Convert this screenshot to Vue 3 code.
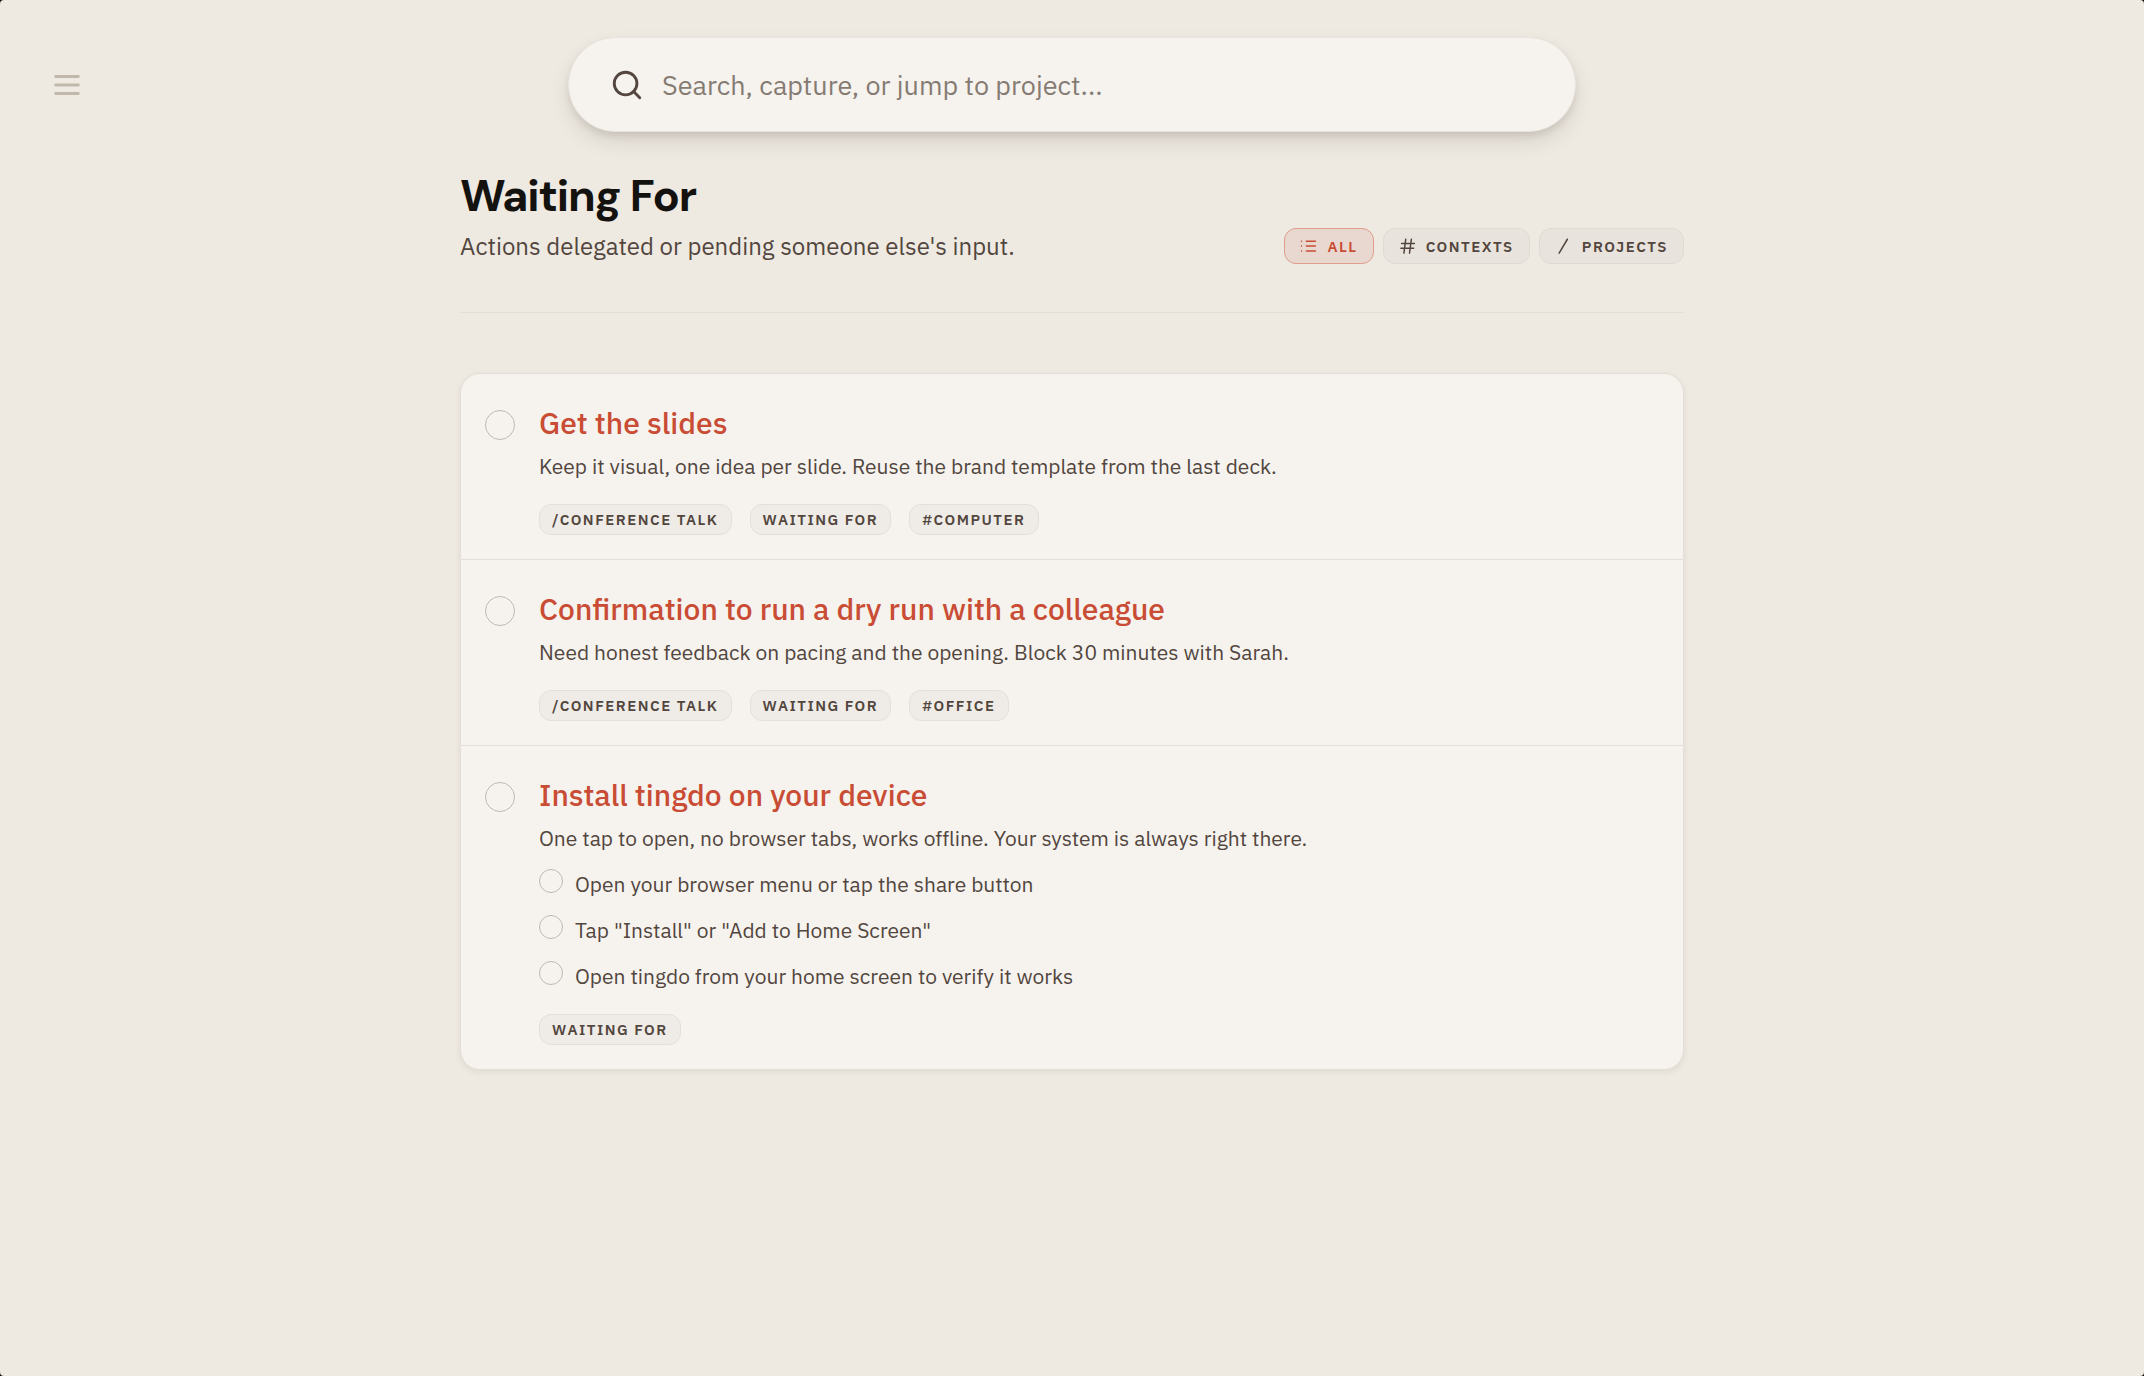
<template>
  <div class="page">
    <header class="topbar">
      <button type="button" class="menu-button" aria-label="Open menu">
        <svg viewBox="0 0 24 24" class="icon-lg">
          <path d="M4 6h16M4 12h16M4 18h16" />
        </svg>
      </button>
      <label class="search-bar">
        <svg viewBox="0 0 24 24" class="icon-lg">
          <circle cx="11" cy="11" r="8" />
          <path d="M21 21l-4.35-4.35" />
        </svg>
        <input v-model="query" type="text" class="search-input" aria-label="Search" placeholder="Search, capture, or jump to project..." />
      </label>
    </header>

    <main class="content">
      <div class="page-header">
        <div class="heading">
          <h1 class="page-title">Waiting For</h1>
          <p class="page-subtitle">Actions delegated or pending someone else's input.</p>
        </div>
        <div class="filters">
          <button v-for="filter in filters" :key="filter.id" type="button" class="filter-button"
                  :class="{ active: activeFilter === filter.id }" @click="activeFilter = filter.id">
            <svg viewBox="0 0 24 24" class="icon-sm">
              <path :d="filter.icon" />
            </svg>
            <span>{{ filter.label }}</span>
          </button>
        </div>
      </div>

      <ul class="action-list">
        <li v-for="action in actions" :key="action.id" class="action-item">
          <input :id="`action-${action.id}`" v-model="action.done" type="checkbox" class="check" />
          <div class="action-body">
            <h2 class="action-title">
              <label :for="`action-${action.id}`">{{ action.title }}</label>
            </h2>
            <p class="action-note">{{ action.note }}</p>
            <ul v-if="action.steps.length" class="steps">
              <li v-for="step in action.steps" :key="step.text">
                <label class="step">
                  <input v-model="step.done" type="checkbox" class="check check-small" />
                  <span>{{ step.text }}</span>
                </label>
              </li>
            </ul>
            <div class="tags">
              <span v-for="tag in action.tags" :key="tag" class="tag">{{ tag }}</span>
            </div>
          </div>
        </li>
      </ul>
    </main>
  </div>
</template>

<script setup>
import { ref } from 'vue';

const query = ref('');
const activeFilter = ref('all');

const filters = [
  { id: 'all', label: 'All', icon: 'M8.5 5.5h12M8.5 12h12M8.5 18.5h12M2 5.5h.01M2 12h.01M2 18.5h.01' },
  { id: 'contexts', label: 'Contexts', icon: 'M3.5 8.5h17M2.5 15h17M9 3L6.5 21.5M16.5 3L14 21.5' },
  { id: 'projects', label: 'Projects', icon: 'M16.5 3l-11 18.5' },
];

const actions = ref([
  {
    id: 1,
    title: 'Get the slides',
    note: 'Keep it visual, one idea per slide. Reuse the brand template from the last deck.',
    done: false,
    steps: [],
    tags: ['/Conference Talk', 'Waiting For', '#Computer'],
  },
  {
    id: 2,
    title: 'Confirmation to run a dry run with a colleague',
    note: 'Need honest feedback on pacing and the opening. Block 30 minutes with Sarah.',
    done: false,
    steps: [],
    tags: ['/Conference Talk', 'Waiting For', '#Office'],
  },
  {
    id: 3,
    title: 'Install tingdo on your device',
    note: 'One tap to open, no browser tabs, works offline. Your system is always right there.',
    done: false,
    steps: [
      { text: 'Open your browser menu or tap the share button', done: false },
      { text: 'Tap "Install" or "Add to Home Screen"', done: false },
      { text: 'Open tingdo from your home screen to verify it works', done: false },
    ],
    tags: ['Waiting For'],
  },
]);
</script>

<style>
html {
  background-color: #0d0f12;
}

body {
  margin: 0;
}
</style>

<style scoped>
.page {
  min-height: 100vh;
  box-sizing: border-box;
  border-radius: 4px;
  background-color: #eee9e1;
  color: #52463e;
  font-family: 'IBM Plex Sans', 'Noto Sans', sans-serif;
}

.page * {
  box-sizing: border-box;
}

button,
input {
  font-family: inherit;
  color: inherit;
}

h1,
h2,
p,
ul {
  margin: 0;
  padding: 0;
}

ul {
  list-style: none;
}

svg {
  flex-shrink: 0;
  fill: none;
  stroke: currentColor;
  stroke-linecap: round;
  stroke-linejoin: round;
}

.icon-lg {
  width: 34px;
  height: 34px;
  stroke-width: 2;
}

.icon-sm {
  width: 18px;
  height: 18px;
  stroke-width: 2;
}

.topbar {
  display: grid;
  grid-template-columns: minmax(100px, 1fr) minmax(0, 1008px) minmax(0, 1fr);
  align-items: center;
  padding-top: 37px;
}

.menu-button {
  display: flex;
  justify-self: start;
  margin-left: 42px;
  padding: 8px;
  border: none;
  background: none;
  color: #bfb8ab;
  cursor: pointer;
}

.search-bar {
  display: flex;
  align-items: center;
  gap: 18px;
  height: 95px;
  padding: 0 41px;
  border: 1px solid #e8e4dd;
  border-radius: 48px;
  background-color: #f6f3ee;
  box-shadow: 0 10px 24px -6px rgba(60, 50, 40, 0.2), 0 4px 8px -2px rgba(60, 50, 40, 0.12);
}

.search-input {
  flex: 1;
  min-width: 0;
  padding: 0;
  border: none;
  outline: none;
  background: none;
  font-size: 27px;
}

.search-input::placeholder {
  color: #857b73;
  opacity: 1;
}

.content {
  max-width: 1224px;
  margin: 0 auto;
  padding: 34px 0;
}

.page-header {
  display: flex;
  align-items: flex-end;
  justify-content: space-between;
  padding-bottom: 48px;
  border-bottom: 1px solid #e3ded6;
}

.page-title {
  margin-bottom: 2px;
  color: #14120f;
  font-family: 'DM Sans', Inter, sans-serif;
  font-size: 45px;
  font-weight: 700;
  line-height: 60px;
  letter-spacing: -0.025em;
}

.page-subtitle {
  font-size: 24px;
  line-height: 36px;
}

.filters {
  display: flex;
  gap: 9px;
}

.filter-button {
  display: flex;
  align-items: center;
  gap: 9px;
  height: 36px;
  padding: 0 15px;
  border: 1px solid #dfdbd4;
  border-radius: 12px;
  background-color: #e8e3dc;
  font-size: 15px;
  font-weight: 600;
  letter-spacing: 0.1em;
  text-transform: uppercase;
  cursor: pointer;
}

.filter-button.active {
  border-color: #e09c8d;
  background-color: #e9d8cf;
  color: #c94c35;
}

.action-list {
  margin-top: 60px;
  border: 1px solid #e3dfd8;
  border-radius: 20px;
  background-color: #f6f3ee;
  box-shadow: 0 2px 6px rgba(60, 50, 40, 0.08);
}

.action-item {
  display: flex;
  align-items: flex-start;
  gap: 24px;
  padding: 27px 24px 24px;
}

.action-item + .action-item {
  border-top: 1px solid #e3dfd8;
}

.check {
  flex-shrink: 0;
  width: 30px;
  height: 30px;
  margin: 9px 0 0;
  border: 1px solid #bfb9b1;
  border-radius: 50%;
  appearance: none;
  cursor: pointer;
}

.check:checked {
  background-color: #c94c35;
}

.check-small {
  width: 24px;
  height: 24px;
  margin: 0;
}

.action-body {
  flex: 1;
  min-width: 0;
}

.action-title {
  color: #c94c35;
  font-size: 30px;
  font-weight: 500;
  line-height: 44px;
}

.action-note {
  font-size: 21px;
  line-height: 42px;
}

.steps {
  display: flex;
  flex-direction: column;
  gap: 16px;
  margin: 10px 0 6px;
}

.step {
  display: flex;
  gap: 12px;
  font-size: 21px;
  line-height: 30px;
}

.tags {
  display: flex;
  flex-wrap: wrap;
  gap: 18px;
  padding-top: 17px;
}

.tag {
  padding: 0 12px;
  border: 1px solid #e3dfd9;
  border-radius: 12px;
  background-color: #efece7;
  font-size: 15px;
  font-weight: 600;
  line-height: 29px;
  letter-spacing: 0.1em;
  text-transform: uppercase;
}
</style>
